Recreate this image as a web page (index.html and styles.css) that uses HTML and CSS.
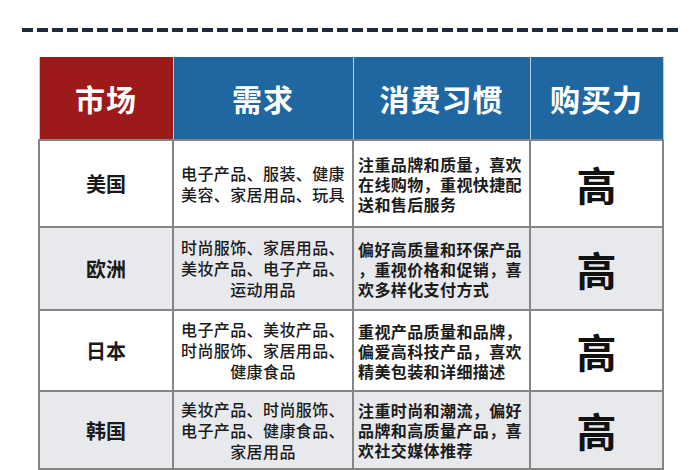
FILE: index.html
```html
<!DOCTYPE html>
<html lang="zh">
<head>
<meta charset="utf-8">
<link rel="stylesheet" href="styles.css">
</head>
<body>
<div class="page">
  <div class="dashes"></div>
  <table class="market">
    <colgroup>
      <col class="c1"><col class="c2"><col class="c3"><col class="c4">
    </colgroup>
    <thead>
      <tr class="head">
        <th class="h-red">市场</th>
        <th class="h-blue">需求</th>
        <th class="h-blue">消费习惯</th>
        <th class="h-blue">购买力</th>
      </tr>
    </thead>
    <tbody>
      <tr class="r1">
        <td class="name">美国</td>
        <td class="need">电子产品、服装、健康<br>美容、家居用品、玩具</td>
        <td class="habit">注重品牌和质量，喜欢<br>在线购物，重视快捷配<br>送和售后服务</td>
        <td class="power">高</td>
      </tr>
      <tr class="r2 alt">
        <td class="name">欧洲</td>
        <td class="need">时尚服饰、家居用品、<br>美妆产品、电子产品、<br>运动用品</td>
        <td class="habit">偏好高质量和环保产品<br>，重视价格和促销，喜<br>欢多样化支付方式</td>
        <td class="power">高</td>
      </tr>
      <tr class="r3">
        <td class="name">日本</td>
        <td class="need">电子产品、美妆产品、<br>时尚服饰、家居用品、<br>健康食品</td>
        <td class="habit">重视产品质量和品牌，<br>偏爱高科技产品，喜欢<br>精美包装和详细描述</td>
        <td class="power">高</td>
      </tr>
      <tr class="r4 alt">
        <td class="name">韩国</td>
        <td class="need">美妆产品、时尚服饰、<br>电子产品、健康食品、<br>家居用品</td>
        <td class="habit">注重时尚和潮流，偏好<br>品牌和高质量产品，喜<br>欢社交媒体推荐</td>
        <td class="power">高</td>
      </tr>
    </tbody>
  </table>
</div>
</body>
</html>
```

FILE: styles.css
```css
html, body {
  margin: 0;
  padding: 0;
  background: #ffffff;
}
body {
  width: 700px;
  height: 470px;
  overflow: hidden;
  font-family: "Noto Sans CJK SC", "Noto Sans", sans-serif;
  color: #1b1b1b;
}
.page {
  padding-top: 28px;
}
.dashes {
  height: 4px;
  margin: 0 20px 0 22px;
  background: repeating-linear-gradient(90deg, #1d2b3a 0 11px, transparent 11px 15px);
}
.market {
  margin: 25px 0 0 38px;
  width: 624px;
  table-layout: fixed;
  border-collapse: collapse;
}
.c1 { width: 134px; }
.c2 { width: 180px; }
.c3 { width: 177px; }
.c4 { width: 133px; }

.head th {
  height: 82px;
  padding: 0;
  color: #ffffff;
  font-size: 30px;
  font-weight: 700;
  text-align: center;
  vertical-align: middle;
  border-left: 1px solid #b9cfe3;
  border-right: 1px solid #b9cfe3;
  letter-spacing: 1px;
}
.h-red { background: #9c1a1a; }
.h-blue { background: #1f67a0; }

td {
  border: 2px solid #858585;
  padding: 0;
  vertical-align: middle;
  background: #ffffff;
}
.alt td { background: #e8e9ed; }
.r1 td { height: 85px; }
.r2 td { height: 81px; }
.r3 td { height: 79px; }
.r4 td { height: 76px; }

.name {
  text-align: center;
  font-size: 20px;
  font-weight: 600;
  color: #1a1a1a;
}
.need {
  text-align: center;
  font-size: 16px;
  line-height: 21px;
  font-weight: 500;
  white-space: nowrap;
  letter-spacing: 0.4px;
}
.habit {
  text-align: left;
  font-size: 16px;
  line-height: 20px;
  font-weight: 700;
  white-space: nowrap;
  padding-left: 4px;
  letter-spacing: 0.4px;
}
.power {
  text-align: center;
  font-size: 40px;
  font-weight: 600;
  color: #111111;
}
```
